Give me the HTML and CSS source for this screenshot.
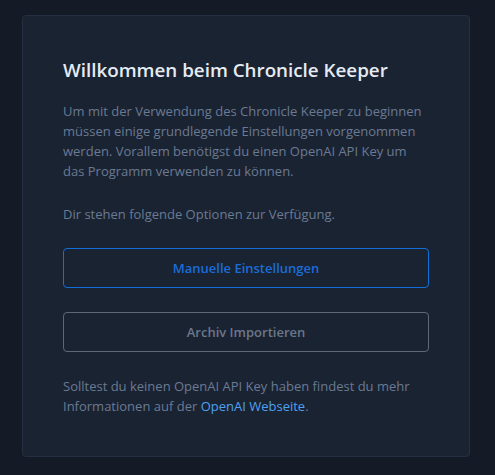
FILE: index.html
```html
<!DOCTYPE html>
<html lang="de">
<head>
<meta charset="utf-8">
<link rel="stylesheet" href="styles.css">
</head>
<body>
<main class="card">
  <h1 class="title">Willkommen beim Chronicle Keeper</h1>
  <p class="text">Um mit der Verwendung des Chronicle Keeper zu beginnen müssen einige grundlegende Einstellungen vorgenommen werden. Vorallem benötigst du einen OpenAI API Key um das Programm verwenden zu können.</p>
  <p class="text options">Dir stehen folgende Optionen zur Verfügung.</p>
  <div class="actions">
    <button class="btn btn-primary">Manuelle Einstellungen</button>
    <button class="btn btn-secondary">Archiv Importieren</button>
  </div>
  <p class="text footer">Solltest du keinen OpenAI API Key haben findest du mehr Informationen auf der <a class="link" href="#">OpenAI Webseite</a>.</p>
</main>
</body>
</html>
```
FILE: styles.css
```css
* { box-sizing: border-box; }
html, body { margin: 0; height: 100%; }
body {
  background: #141b26;
  font-family: "Open Sans", "Noto Sans", sans-serif;
  padding: 15px 0 0 22px;
}
.card {
  width: 448px;
  height: 442px;
  background: #1a2332;
  border: 1px solid #243042;
  border-radius: 4px;
  padding: 40px;
}
.title {
  margin: 0 0 17px;
  font-size: 18.8px;
  line-height: 28px;
  font-weight: 600;
  color: #e6ebf2;
}
.text {
  margin: 0;
  font-size: 13px;
  line-height: 20px;
  color: #6b7a92;
}
.options { margin-top: 23px; }
.actions {
  display: flex;
  flex-direction: column;
  gap: 24px;
  margin-top: 24px;
}
.btn {
  height: 40px;
  border-radius: 4px;
  background: transparent;
  font-family: inherit;
  font-size: 13px;
  font-weight: 600;
}
.btn-primary {
  border: 1px solid #136fd8;
  color: #1a6dd8;
}
.btn-secondary {
  border: 1px solid #5c687a;
  color: #6b778a;
}
.footer { margin-top: 24px; }
.link { color: #4ea1f3; text-decoration: none; }
```
